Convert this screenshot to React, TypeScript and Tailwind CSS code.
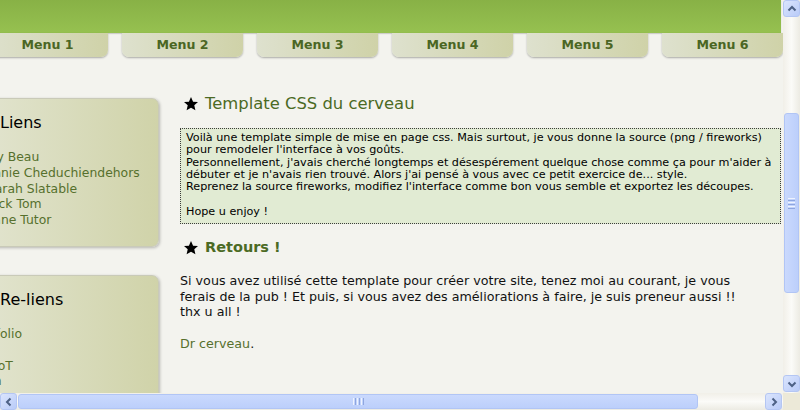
import React from "react";

const menus = ["Menu 1", "Menu 2", "Menu 3", "Menu 4", "Menu 5", "Menu 6"];
const liens = ["Guy Beau", "Minnie Cheduchiendehors", "Sharah Slatable", "Black Tom", "Léane Tutor"];
const reliens = ["Portfolio", "CV", "Le BoT", "Evan"];

function Star() {
  return (
    <svg width="16" height="16" viewBox="0 0 24 24" className="shrink-0">
      <path
        d="M12 1.5l3.1 7 7.4.6-5.6 4.9 1.7 7.4L12 17.5 5.4 21.4l1.7-7.4L1.5 9.1l7.4-.6z"
        fill="#000"
      />
    </svg>
  );
}

function Chevron({ dir }: { dir: "up" | "down" | "left" | "right" }) {
  const d = {
    up: "M3.5 8.5l3.5-3.5 3.5 3.5",
    down: "M3.5 5.5l3.5 3.5 3.5-3.5",
    left: "M8.5 3.5L5 7l3.5 3.5",
    right: "M5.5 3.5L9 7l-3.5 3.5",
  }[dir];
  return (
    <svg width="14" height="14" viewBox="0 0 14 14">
      <path d={d} fill="none" stroke="#4d6185" strokeWidth="2" />
    </svg>
  );
}

function ScrollButton({ dir }: { dir: "up" | "down" | "left" | "right" }) {
  return (
    <div className="w-[17px] h-[17px] shrink-0 flex items-center justify-center rounded-[3px] border border-[#b4c6f3] bg-gradient-to-br from-[#dbe5fd] to-[#b9cbf8]">
      <Chevron dir={dir} />
    </div>
  );
}

function VScroll() {
  return (
    <div className="w-[17px] h-[393px] flex flex-col bg-gradient-to-r from-[#f1efe8] via-[#fbfbf8] to-[#ecebe3]">
      <ScrollButton dir="up" />
      <div className="h-[96px]" />
      <div className="h-[180px] mx-[1px] flex flex-col items-center justify-center gap-[1px] rounded-[3px] border border-[#b1c5f5] bg-gradient-to-r from-[#cad9fd] to-[#bccffb]">
        <div className="w-[7px] h-[1px] bg-[#eef3fe]" />
        <div className="w-[7px] h-[1px] bg-[#8ea6df]" />
        <div className="w-[7px] h-[1px] bg-[#eef3fe]" />
        <div className="w-[7px] h-[1px] bg-[#8ea6df]" />
        <div className="w-[7px] h-[1px] bg-[#eef3fe]" />
        <div className="w-[7px] h-[1px] bg-[#8ea6df]" />
      </div>
      <div className="flex-1" />
      <ScrollButton dir="down" />
      <div className="h-[1px]" />
    </div>
  );
}

function HScroll() {
  return (
    <div className="w-[783px] h-[17px] flex bg-gradient-to-b from-[#f1efe8] via-[#fbfbf8] to-[#ecebe3]">
      <ScrollButton dir="left" />
      <div className="w-[680px] ml-[1px] my-[1px] flex items-center justify-center gap-[1px] rounded-[3px] border border-[#b1c5f5] bg-gradient-to-b from-[#cad9fd] to-[#bccffb]">
        <div className="w-[1px] h-[7px] bg-[#eef3fe]" />
        <div className="w-[1px] h-[7px] bg-[#8ea6df]" />
        <div className="w-[1px] h-[7px] bg-[#eef3fe]" />
        <div className="w-[1px] h-[7px] bg-[#8ea6df]" />
        <div className="w-[1px] h-[7px] bg-[#eef3fe]" />
        <div className="w-[1px] h-[7px] bg-[#8ea6df]" />
      </div>
      <div className="flex-1" />
      <ScrollButton dir="right" />
      <div className="w-[1px]" />
    </div>
  );
}

function SideBox({ title, items, shift, className }: { title: string; items: string[]; shift: number; className?: string }) {
  return (
    <div
      className={
        "w-[220px] rounded-r-[7px] border border-[#c9cab8] bg-gradient-to-r from-[#e6e8d8] to-[#d0d3a9] shadow-[1px_1px_3px_rgba(0,0,0,0.25)] pt-[14px] pb-[18px] " +
        (className ?? "")
      }
    >
      <div className="pl-[60px] text-[16px] leading-[20px] text-black">{title}</div>
      <ul className="mt-[16px] text-[12.4px] leading-[15.8px] text-[#56702d] whitespace-nowrap" style={{ paddingLeft: 60 - shift }}>
        {items.map((it) => (
          <li key={it}>{it}</li>
        ))}
      </ul>
    </div>
  );
}

export default function App() {
  return (
    <div className="w-[800px] h-[410px] overflow-hidden flex flex-col bg-[#f3f3ee] font-['DejaVu_Sans',Verdana,sans-serif]">
      <div className="flex h-[393px]">
        <div className="w-[783px] h-full overflow-hidden">
          <div className="w-[781px] h-[33px] bg-gradient-to-b from-[#88b146] to-[#96c150] shadow-[0_1px_1px_rgba(0,0,0,0.15)]" />
          <nav className="flex gap-[14px] ml-[-13px]">
            {menus.map((m) => (
              <div
                key={m}
                className="w-[121px] h-[24px] shrink-0 flex items-center justify-center rounded-b-[7px] bg-gradient-to-r from-[#dee1ce] to-[#cfd2a8] shadow-[0_1px_2px_rgba(0,0,0,0.3)] text-[12.6px] font-bold text-[#4b6624]"
              >
                {m}
              </div>
            ))}
          </nav>

          <div className="flex gap-[20px] ml-[-61px]">
            <aside className="w-[221px] shrink-0 flex flex-col gap-[28px] pt-[41px]">
              <SideBox title="Liens" items={liens} shift={21} />
              <SideBox title="Re-liens" items={reliens} shift={29} className="h-[160px]" />
            </aside>

            <main className="w-[601px] shrink-0 pt-[38px]">
              <h1 className="flex items-center gap-[6px] pl-[3px] h-[18px] text-[16.4px] font-normal text-[#4b6a24]">
                <Star />
                <span>Template CSS du cerveau</span>
              </h1>
              <div className="mt-[15px] h-[96px] border border-dotted border-[#3c3c3c] bg-[#e1ebd3] px-[5px] pt-[3px] text-[11.2px] leading-[12.3px] text-black whitespace-nowrap">
                Voilà une template simple de mise en page css. Mais surtout, je vous donne la source (png / fireworks)
                <br />
                pour remodeler l'interface à vos goûts.
                <br />
                Personnellement, j'avais cherché longtemps et désespérement quelque chose comme ça pour m'aider à
                <br />
                débuter et je n'avais rien trouvé. Alors j'ai pensé à vous avec ce petit exercice de... style.
                <br />
                Reprenez la source fireworks, modifiez l'interface comme bon vous semble et exportez les découpes.
                <br />
                <br />
                Hope u enjoy !
              </div>
              <h2 className="mt-[15px] flex items-center gap-[6px] pl-[3px] h-[18px] text-[14.5px] font-bold text-[#4b6a24]">
                <Star />
                <span>Retours !</span>
              </h2>
              <p className="mt-[16px] text-[12.7px] leading-[15.7px] text-[#111] whitespace-nowrap">
                Si vous avez utilisé cette template pour créer votre site, tenez moi au courant, je vous
                <br />
                ferais de la pub ! Et puis, si vous avez des améliorations à faire, je suis preneur aussi !!
                <br />
                thx u all !
                <br />
                <br />
                <span className="text-[#56702d]">Dr cerveau</span>.
              </p>
            </main>
          </div>
        </div>
        <VScroll />
      </div>
      <div className="flex h-[17px]">
        <HScroll />
        <div className="w-[17px] h-[17px] bg-[#ece9d8]" />
      </div>
    </div>
  );
}
